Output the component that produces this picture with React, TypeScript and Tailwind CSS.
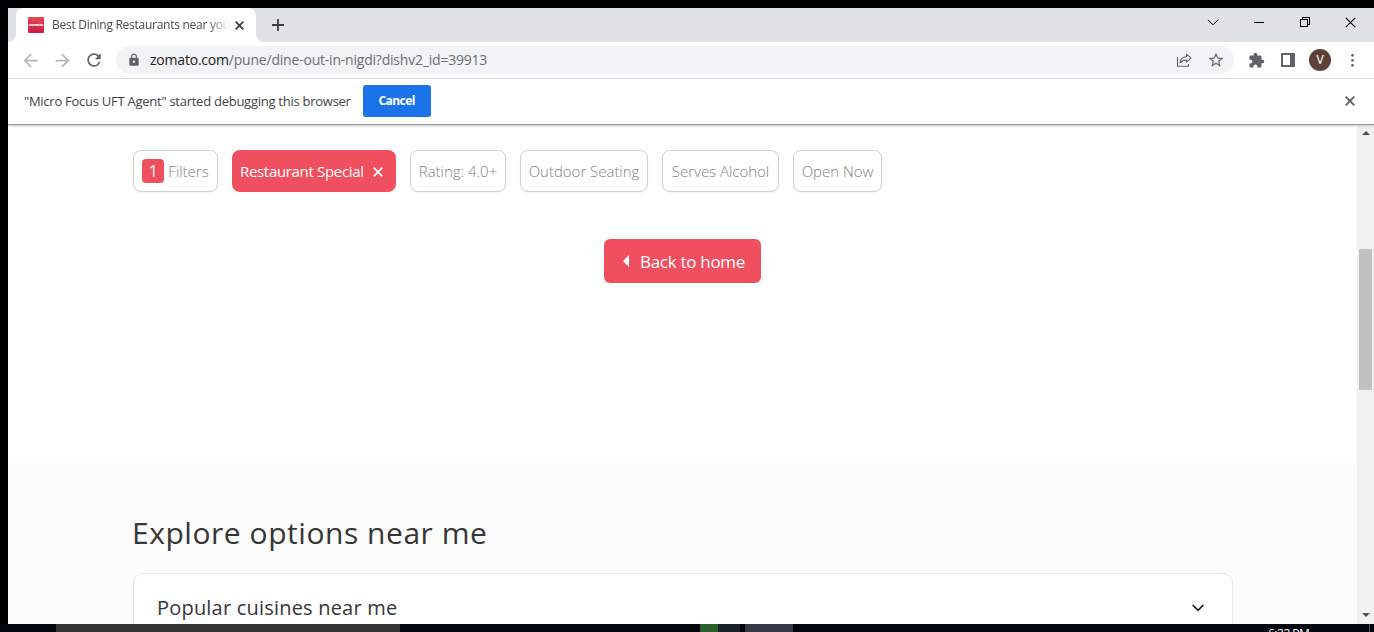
import type { ReactNode } from "react";
import { MdArrowBack, MdArrowForward, MdRefresh, MdLock, MdExtension, MdStarBorder } from "react-icons/md";

function Cross({ size, width, className = "" }: { size: number; width: number; className?: string }) {
  return (
    <svg width={size} height={size} viewBox="0 0 10 10" className={className} fill="none" stroke="currentColor" strokeWidth={width}>
      <path d="M0.7 0.7 9.3 9.3M9.3 0.7 0.7 9.3" />
    </svg>
  );
}

function TabStrip() {
  return (
    <div className="flex h-[34px] shrink-0 bg-[#dee1e6]">
      <div className="flex w-2 bg-white">
        <div className="w-2 rounded-br-lg bg-[#dee1e6]" />
      </div>
      <div className="bg-[#dee1e6]">
        <div className="flex h-[34px] w-[240px] items-center rounded-t-lg bg-white pl-3">
          <div className="flex h-4 w-4 items-center justify-center rounded-[1px] bg-linear-to-b from-[#e8454f] to-[#c9184a]">
            <span className="font-['Open_Sans',sans-serif] text-[4px] leading-none font-extrabold tracking-[-0.2px] text-white">zomato</span>
          </div>
          <div className="ml-2 w-[178px] overflow-hidden mask-r-from-88% text-[12px] leading-[18px] tracking-[-0.27px] whitespace-nowrap text-[#45494d]">
            Best Dining Restaurants near you
          </div>
          <Cross size={9} width={1.9} className="ml-[5px] text-[#3c4043]" />
        </div>
      </div>
      <div className="flex w-2 bg-white">
        <div className="w-2 rounded-bl-lg bg-[#dee1e6]" />
      </div>
      <svg width="12" height="12" viewBox="0 0 12 12" className="mt-[11px] ml-2 text-[#3c4043]" stroke="currentColor" strokeWidth="1.8">
        <path d="M6 0V12M0 6H12" />
      </svg>
      <div className="mt-2 mr-[18px] ml-auto flex h-3 items-center text-black">
        <svg width="12" height="7" viewBox="0 0 12 7" fill="none" stroke="currentColor">
          <path d="M1 0.8 6 5.8 11 0.8" />
        </svg>
        <div className="ml-[35px] h-px w-[10px] bg-black" />
        <svg width="10" height="10" viewBox="0 0 10 10" className="ml-9" fill="none" stroke="currentColor" shapeRendering="crispEdges">
          <path d="M0.5 2.5H7.5V9.5H0.5ZM2.5 2.5V0.5H9.5V7.5H7.5" />
        </svg>
        <Cross size={11} width={1} className="ml-[35px]" />
      </div>
    </div>
  );
}

function Toolbar() {
  return (
    <div className="flex h-[37px] shrink-0 items-center border-b border-[#dadce0] bg-white pl-3 text-[#5f6368]">
      <MdArrowBack size={21} className="text-[#b4b6b9]" />
      <MdArrowForward size={21} className="ml-[11px] text-[#b4b6b9]" />
      <MdRefresh size={20} className="ml-[11px]" />
      <div className="ml-3 flex h-7 w-[1118px] items-center rounded-full bg-[#f1f3f4] pl-[11px]">
        <MdLock size={14} />
        <div className="ml-[9px] text-[14px] leading-5 tracking-[-0.21px] text-[#6b6f73]">
          <span className="text-[#202124]">zomato.com</span>/pune/dine-out-in-nigdi?dishv2_id=39913
        </div>
        <svg width="16" height="14" viewBox="0 0 16 14" className="mr-[11px] ml-auto" fill="none" stroke="currentColor" strokeWidth="1.1">
          <path d="M1.5 4V13.2H12.5V11" />
          <path d="M10.5 1.2 15 5.2 10.5 9.2V7C7.5 6.9 5.6 7.8 4 9.8 4.4 6.2 6.6 3.9 10.5 3.5Z" strokeLinejoin="round" />
        </svg>
        <MdStarBorder size={18} className="mr-[9px] ml-1" />
      </div>
      <MdExtension size={17} className="ml-[14px]" />
      <svg width="14" height="14" viewBox="0 0 14 14" className="ml-4">
        <path fill="currentColor" fillRule="evenodd" d="M0 0H14V14H0ZM2 2V12H9V2Z" />
      </svg>
      <div className="ml-[14px] flex h-[22px] w-[22px] items-center justify-center rounded-full bg-[#5d4037] font-['Roboto',sans-serif] text-[12px] text-white">V</div>
      <svg width="4" height="14" viewBox="0 0 4 14" className="ml-[19px]" fill="currentColor">
        <circle cx="2.5" cy="2.3" r="1.4" />
        <circle cx="2.5" cy="7.3" r="1.4" />
        <circle cx="2.5" cy="12.3" r="1.4" />
      </svg>
    </div>
  );
}

function InfoBar() {
  return (
    <div className="relative z-10 flex h-[45px] shrink-0 items-center bg-white pr-[19px] pb-0.5 pl-4 shadow-[0_1px_1px_#9a9a9a,0_2px_3px_#d0d0d0]">
      <span className="text-[13px] leading-5 tracking-[-0.26px] text-[#3f4346]">"Micro Focus UFT Agent" started debugging this browser</span>
      <button className="ml-3 h-8 w-[68px] rounded-[3px] bg-[#1a73e8] text-[12px] font-bold tracking-[-0.55px] text-white">Cancel</button>
      <Cross size={10} width={1.9} className="ml-auto text-[#5f6368]" />
    </div>
  );
}

function Chip({ width, children }: { width: string; children: ReactNode }) {
  return (
    <div className={`flex h-[42px] items-center justify-center rounded-lg border border-[#cfcfcf] pt-px text-[15px] font-light tracking-[-0.02px] whitespace-nowrap text-[#828282] shadow-[0_1px_2px_rgba(0,0,0,0.05)] ${width}`}>
      {children}
    </div>
  );
}

function Page() {
  return (
    <div className="flex w-[1349px] flex-col bg-white pt-[26px]">
      <div className="flex gap-[14px] pl-[125px]">
        <Chip width="w-[85px]">
          <span className="mr-1 mb-px flex h-6 w-[22px] items-center justify-center rounded bg-[#ef4f5f] text-[16px] font-normal text-white">1</span>
          Filters
        </Chip>
        <div className="flex h-[42px] w-[164px] items-center rounded-lg bg-[#ef4f5f] pt-px pl-2 text-[15px] font-normal tracking-[-0.32px] whitespace-nowrap text-white">
          Restaurant Special
          <Cross size={10} width={1.7} className="ml-[9px]" />
        </div>
        <Chip width="w-[96px]">Rating: 4.0+</Chip>
        <Chip width="w-[128px]">Outdoor Seating</Chip>
        <Chip width="w-[117px]">Serves Alcohol</Chip>
        <Chip width="w-[89px]">Open Now</Chip>
      </div>
      <button className="mt-[47px] flex h-11 w-[157px] shrink-0 items-center self-center rounded-md bg-[#ef4f5f] pl-[19px] text-[17px] font-normal tracking-[-0.29px] text-white">
        <svg width="6" height="12" viewBox="0 0 6 12" fill="currentColor">
          <path d="M6 0V12L0 6Z" />
        </svg>
        <span className="mt-0.5 ml-[11px]">Back to home</span>
      </button>
      <div className="mt-[180px] flex h-[200px] shrink-0 flex-col bg-[#fcfcfc] pl-[125px]">
        <h2 className="mt-[49px] -ml-px text-[30px] leading-[42px] tracking-[0.54px] text-[#363636]">Explore options near me</h2>
        <div className="mt-[19px] flex h-[100px] w-[1100px] rounded-[10px] border border-[#e8e8e8] bg-white pt-5 pr-7 pl-[23px] shadow-[0_1px_3px_rgba(0,0,0,0.03)]">
          <span className="text-[20px] leading-7 font-normal tracking-[0.2px] text-[#363636]">Popular cuisines near me</span>
          <svg width="12" height="8" viewBox="0 0 12 8" className="mt-[10px] ml-auto" fill="none" stroke="#1c1c1c" strokeWidth="1.7">
            <path d="M0.7 1 6 6.3 11.3 1" />
          </svg>
        </div>
      </div>
    </div>
  );
}

function Scrollbar() {
  return (
    <div className="flex w-[17px] flex-col items-center bg-[#f1f1f1]">
      <svg width="8" height="4" viewBox="0 0 8 4" className="mt-[7px]" fill="#505050">
        <path d="M0 4 4 0 8 4Z" />
      </svg>
      <div className="mt-[114px] mr-px h-[141px] w-[13px] bg-[#c1c1c1]" />
      <svg width="8" height="4" viewBox="0 0 8 4" className="mt-auto mb-[7px]" fill="#505050">
        <path d="M0 0H8L4 4Z" />
      </svg>
    </div>
  );
}

function Taskbar() {
  return (
    <div className="flex h-2 overflow-hidden bg-[#02060d]">
      <div className="ml-14 w-[344px] bg-[#333333]" />
      <div className="ml-[300px] w-[18px] bg-[#2b602e]" />
      <div className="w-[22px] bg-[#1b212b]" />
      <div className="ml-[5px] w-12 bg-[#353945]" />
      <div className="mt-1 ml-[475px] h-3 font-['Open_Sans',sans-serif] text-[12px] leading-[12px] tracking-[-0.5px] whitespace-nowrap text-white">6:22 PM</div>
      <div className="mr-1 ml-auto w-px bg-[#4a4e55]" />
    </div>
  );
}

export default function App() {
  return (
    <div className="flex h-[632px] w-[1374px] flex-col overflow-hidden bg-black pt-2 font-['Open_Sans','Noto_Sans',sans-serif]">
      <div className="ml-2 flex h-[616px] flex-col overflow-hidden bg-white">
        <TabStrip />
        <Toolbar />
        <InfoBar />
        <div className="flex h-[500px] overflow-hidden">
          <Page />
          <Scrollbar />
        </div>
      </div>
      <Taskbar />
    </div>
  );
}
